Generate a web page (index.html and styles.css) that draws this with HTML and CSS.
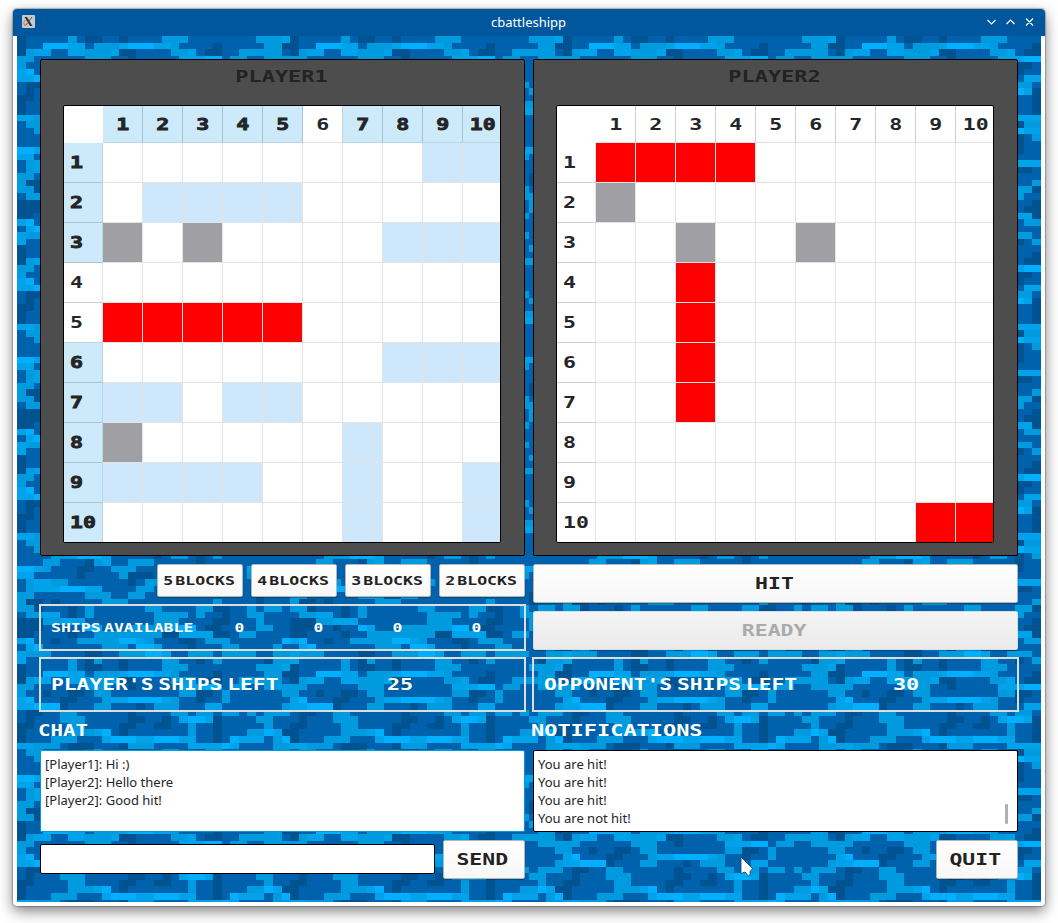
FILE: index.html
```html
<!DOCTYPE html>
<html lang="en">
<head>
<meta charset="utf-8">
<title>cbattleshipp</title>
<link rel="stylesheet" href="styles.css">
</head>
<body>
<div class="window">
  <header class="titlebar">
    <svg class="app-icon" width="13" height="13" viewBox="0 0 13 13"><rect width="13" height="13" rx="1" fill="#c9c9c9"/><path d="M2.500 2h2.500l5.500 9H8z" fill="#333"/><path d="M10 2L7 6M5.500 8L3 11" stroke="#333" stroke-width=".8"/><path d="M3.500 5Q1 7 2 9.500L4 11" stroke="#e2714a" fill="none"/></svg>
    <span class="title">cbattleshipp</span>
    <svg class="controls" width="48" height="12" viewBox="0 0 48 12" fill="none" stroke="#fff" stroke-width="1.200"><path d="M.500 4l4 4 4-4M19.500 8l4-4 4 4M39 2.500l7 7M46 2.500l-7 7"/></svg>
  </header>
  <main class="sea">
    <svg class="water" id="water" width="1024" height="866" shape-rendering="crispEdges"></svg>
    <div class="columns">
      <section class="side">
        <div class="board"><h2 class="px name">PLAYER1</h2><div class="table" id="own"></div></div>
        <div class="blocks">
          <button><span class="px small">5 BLOCKS</span></button><button><span class="px small">4 BLOCKS</span></button><button><span class="px small">3 BLOCKS</span></button><button><span class="px small">2 BLOCKS</span></button>
        </div>
        <div class="frame available"><span class="px label">SHIPS AVAILABLE</span><span class="px n">0</span><span class="px n">0</span><span class="px n">0</span><span class="px n">0</span></div>
        <div class="frame left"><span class="px mine">PLAYER'S SHIPS LEFT</span><span class="px count">25</span></div>
        <h3><span class="px chat">CHAT</span></h3>
        <div class="list focus"><p>[Player1]: Hi :)</p><p>[Player2]: Hello there</p><p>[Player2]: Good hit!</p></div>
        <div class="bottom"><input class="message" type="text"><button class="action"><span class="px big">SEND</span></button></div>
      </section>
      <section class="side">
        <div class="board"><h2 class="px name">PLAYER2</h2><div class="table" id="enemy"></div></div>
        <div class="moves"><button><span class="px big">HIT</span></button><button class="off"><span class="px big">READY</span></button></div>
        <div class="frame left"><span class="px theirs">OPPONENT'S SHIPS LEFT</span><span class="px count">30</span></div>
        <h3><span class="px notes">NOTIFICATIONS</span></h3>
        <div class="list"><p>You are hit!</p><p>You are hit!</p><p>You are hit!</p><p>You are not hit!</p><i class="thumb"></i></div>
        <div class="bottom end"><button class="action"><span class="px big">QUIT</span></button></div>
      </section>
    </div>
  </main>
</div>
<svg class="pointer" width="14" height="22" viewBox="0 0 14 22"><path d="M1 1v16.500l4-1.500 3.500 4 1.500-.500v-4l2.500-3z" fill="#fff" stroke="#0b3c60" stroke-width=".8"/></svg>
<script src="game.js"></script>
</body>
</html>
```
FILE: styles.css
```css
* { box-sizing: border-box; margin: 0; padding: 0; }
body { background: #fff; width: 1058px; height: 923px; padding: 9px 13px; overflow: hidden; font-family: "Noto Sans", sans-serif; color: #232629; }
.window { width: 1032px; height: 897px; background: #fff; border-radius: 4px; box-shadow: 0 0 1px 1px rgba(0,0,0,.25), 0 5px 14px rgba(0,0,0,.5); }
.titlebar { height: 27px; background: #00579d; border-radius: 4px 4px 0 0; display: flex; align-items: center; justify-content: space-between; padding: 0 10px 2px 9px; color: #fff; }
.title { font-size: 13px; padding-left: 35px; }
.sea { display: grid; width: 1024px; height: 866px; margin: 0 4px; overflow: hidden; background: #0062ac; }
.water, .columns { grid-area: 1 / 1; }
.columns { display: grid; grid-template-columns: 485px 485px; column-gap: 8px; padding: 23px; z-index: 1; }
.side { display: flex; flex-direction: column; }
.px { font-family: "DejaVu Sans Mono", monospace; font-weight: bold; font-size: 16px; line-height: 20px; display: inline-block; white-space: pre; }
.board { height: 497px; background: #4d4d4d; border: 1px solid #000; border-radius: 2px; text-align: center; }
.board .name { color: #232323; transform: scaleX(1.37); display: block; margin: 7px 2px 18px 0; }
.table { display: grid; width: 438px; height: 438px; margin-left: 22px; border: 1px solid #000; border-radius: 2px; background: #fff; grid-template-columns: 39px repeat(9, 40px) 37px; grid-template-rows: 37px repeat(9, 40px) 39px; overflow: hidden; }
.cell { border-right: 1px solid #e4e4e4; border-bottom: 1px solid #e4e4e4; display: flex; align-items: center; justify-content: center; }
.cell.corner { border-color: #fff; }
.cell.top { border-right-color: #cfcfcf; padding-top: 1px; }
.cell.row { border-bottom-color: #cfcfcf; justify-content: flex-start; padding: 1px 0 0 6px; }
.cell.on { background: #cdeafb; border-color: #a9c3d0; }
.cell.top.on { border-bottom-color: #b9d6e6; }
.cell.row.on { border-right-color: #b9d6e6; }
.cell .px { transform: scaleX(1.35); }
.cell.row .px { transform-origin: left; }
.cell .ten { transform: scaleX(1.34); }
.cell.top .ten { margin-left: 3px; }
.cell.on .px { -webkit-text-stroke: .8px #232323; }
.cell.last-col { border-right: 0; }
.cell.last-row { border-bottom: 0; }
.ship { background: #cfe7fb; }
.miss { background: #a0a0a4; }
.hit { background: #f00; }
.blocks { display: flex; gap: 8px; margin-top: 8px; justify-content: flex-end; }
button { border: 1px solid #b5b5b5; border-radius: 2px; background: linear-gradient(#fff, #f7f7f7); height: 39px; color: #232323; display: flex; align-items: center; justify-content: center; box-shadow: 0 1px 1px rgba(0,0,0,.25); padding-right: 3px; }
.blocks button { width: 86px; height: 33px; padding-right: 1px; }
.small { font-size: 12.5px; transform: scaleX(1.32); word-spacing: -6px; }
.big { transform: scaleX(1.34); }
.moves { display: flex; flex-direction: column; gap: 8px; margin-top: 8px; height: 93px; }
button.off { background: linear-gradient(#f4f4f4, #eaeaea); color: #aaa; border-color: #ddd; }
.frame { border: 2px solid #ddd; margin: 0 -1px; color: #fff; display: flex; align-items: center; }
.available { height: 47px; margin-top: 7px; margin-bottom: 6px; padding-left: 10px; }
.left { height: 55px; padding-left: 10px; }
.available .px { font-size: 12.5px; }
.label { width: 149px; transform: scaleX(1.32); transform-origin: left; word-spacing: -5px; }
.n { width: 79px; text-align: center; transform: scaleX(1.3); }
.mine, .theirs { width: 299px; transform: scaleX(1.33); transform-origin: left; word-spacing: -6px; }
.count { width: 100px; text-align: center; transform: scaleX(1.36); }
.theirs { width: 312px; }
h3 { height: 38px; display: flex; align-items: center; color: #fff; margin-left: -2px; padding-bottom: 1px; }
.chat { transform: scaleX(1.3); transform-origin: left; }
.notes { transform: scaleX(1.37); transform-origin: left; }
.list { height: 82px; border: 1px solid #000; border-radius: 2px; background: #fff; font-size: 13px; line-height: 18px; padding: 4px; position: relative; }
.focus { border-color: #0098e5; }
.thumb { position: absolute; right: 9px; bottom: 7px; width: 3px; height: 20px; background: #b0b0b0; border-radius: 1px; }
.bottom { display: flex; gap: 8px; margin-top: 8px; height: 39px; align-items: center; }
.end { justify-content: flex-end; }
.message { width: 395px; height: 30px; margin-bottom: 1px; border: 1px solid #000; border-radius: 2px; background: #fff; }
.action { width: 82px; }
.pointer { position: absolute; left: 740px; top: 856px; z-index: 2; }
```
FILE: game.js
```js
// Water texture: a 32x32 motif repeated over 120x120 blocks, then started again.
const motif = [
"d.....l.dd..d....lll........lllm",
"d..bbbmm.lllmbbbmml....d.....lld",
"dlmm..mmlllmdd....llm.dd..lllll.",
"ll......lll..d.....mmmbb.ll..lll",
"l..d..dd.ll........lldd.l......l",
"mb...dd...lmmbbbbml..d..l.......",
"mmbbbd...ll...d.lll...mm.......l",
".dd..ll......d....ll.ll.ll.l.lll",
".d...lll.....dd..d.mbbmd....ll..",
"dd....ll....dd..dd..l..d.....l..",
"d.....lllmb.d.......l..d...llbmd",
"d...lll...mbbbmmbbbmm..d.bmmm.lb",
"mmlll.ddd...dlll....mmmmbm....ll",
".ll...dd.l...dd..ll..dll......ll",
"..l....lll..d....ll..bmm........",
"....lllbbbm.....d.ll.d.l........",
"...ll...dlm..lll.....d..........",
"bbml...dd..lll.......d.....mm...",
"mm.....d....lddd...........l....",
".lmmll.......d.ll....mmm........",
".lmmmbbbmm....ll.....dd.........",
"ll......lll..ll.............d...",
"ldd.d.....lll..........l....d...",
"lld...d.l......ll....lldd..l.ll.",
".llmm.d.l.......llll.l..d..ll...",
"dddllmmm........lll....dd...l...",
"ddd..d..bm...llllllbb.dd....ll..",
"dd....d..llllllllddmmmmdd.ll....",
"mb..d..lllllbbml...dd.lll......b",
".mb.......lll.bbm...d...ll....l.",
"mlll....dd..lllbbm..lll.llll..ll",
"m.....l.dl..d....ll..d.l.....dll"
];
const tones = { d: "#005391", l: "#009adf", m: "#00a2e9", b: "#00b0ff" };
const paths = { d: "", l: "", m: "", b: "" };
for (let r = 0; r < 133; r++) {
  for (let c = 0; c < 120; c++) {
    const t = motif[(r % 120) % 32][c % 32];
    if (!paths.hasOwnProperty(t)) continue;
    const x0 = Math.round(c * 1024 / 120), x1 = Math.round((c + 1) * 1024 / 120);
    const y0 = Math.round(r * 785 / 120), y1 = Math.round((r + 1) * 785 / 120);
    paths[t] += `M${x0} ${y0}H${x1}V${y1}H${x0}z`;
  }
}
document.getElementById("water").innerHTML =
  Object.keys(paths).map(t => `<path fill="${tones[t]}" d="${paths[t]}"/>`).join("");

// Cells: s = ship, m = miss, h = hit
const kinds = { s: "ship", m: "miss", h: "hit" };
function board(id, rows, cols, lines) {
  let html = '<div class="cell corner"></div>';
  const text = n => `<span class="px${n === 10 ? " ten" : ""}">${n}</span>`;
  for (let c = 1; c <= 10; c++)
    html += `<div class="cell top${cols.includes(c) ? " on" : ""}${c === 10 ? " last-col" : ""}">${text(c)}</div>`;
  lines.forEach((line, i) => {
    const last = i === 9 ? " last-row" : "";
    html += `<div class="cell row${rows.includes(i + 1) ? " on" : ""}${last}">${text(i + 1)}</div>`;
    [...line].forEach((k, j) => {
      html += `<div class="cell ${kinds[k] || ""}${last}${j === 9 ? " last-col" : ""}"></div>`;
    });
  });
  document.getElementById(id).innerHTML = html;
}
board("own", [1, 2, 3, 6, 7, 8, 9, 10], [1, 2, 3, 4, 5, 7, 8, 9, 10], [
  "........ss", ".ssss.....", "m.m....sss", "..........", "hhhhh.....",
  ".......sss", "ss.ss.....", "m.....s...", "ssss..s..s", "......s..s"]);
board("enemy", [], [], [
  "hhhh......", "m.........", "..m..m....", "..h.......", "..h.......",
  "..h.......", "..h.......", "..........", "..........", "........hh"]);
```
